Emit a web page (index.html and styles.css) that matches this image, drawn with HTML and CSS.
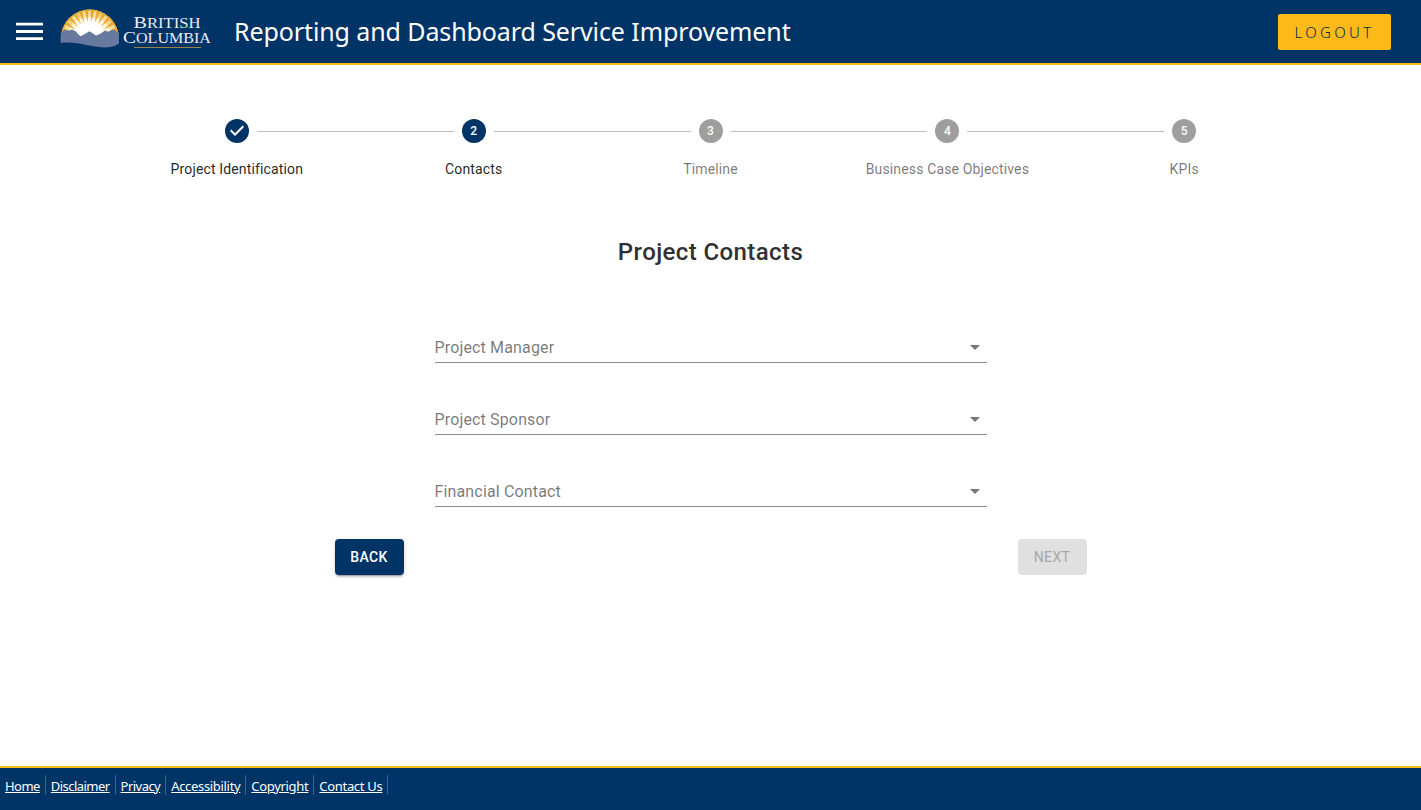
FILE: index.html
```html
<!DOCTYPE html>
<html lang="en">
<head>
<meta charset="utf-8">
<title>Reporting and Dashboard Service Improvement</title>
<link rel="stylesheet" href="styles.css">
</head>
<body>
<header class="header">
  <svg class="menu" width="27" height="20" viewBox="0 0 27 20" fill="#fff"><path d="M0 .7h27v2.800H0zM0 8h27v2.900H0zM0 15.300h27v2.800H0z"/></svg>
  <svg class="logo" width="154" height="42" viewBox="0 0 154 42">
    <defs>
      <clipPath id="dome"><path d="M.8 30.500a29 29 0 0 1 58 0z"/></clipPath>
      <path id="ray" d="M29.500 14L27.300-1H31.700z"/>
      <path id="thin" d="M29.500 9L28.700-1H30.300z"/>
    </defs>
    <g clip-path="url(#dome)">
      <path fill="#f8dc9c" d="M0 0h60v32H0z"/>
      <ellipse cx="29.500" cy="29" rx="22" ry="20" fill="#fff6de"/>
      <circle cx="29.500" cy="28" r="15" fill="#fff"/>
      <g fill="#e5a82c">
        <use href="#ray" transform="rotate(-84 29.500 31)"/><use href="#ray" transform="rotate(-70 29.500 31)"/>
        <use href="#ray" transform="rotate(-56 29.500 31)"/><use href="#ray" transform="rotate(-43 29.500 31)"/>
        <use href="#ray" transform="rotate(-30 29.500 31)"/><use href="#ray" transform="rotate(-18 29.500 31)"/>
        <use href="#ray" transform="rotate(-6 29.500 31)"/><use href="#ray" transform="rotate(6 29.500 31)"/>
        <use href="#ray" transform="rotate(18 29.500 31)"/><use href="#ray" transform="rotate(30 29.500 31)"/>
        <use href="#ray" transform="rotate(43 29.500 31)"/><use href="#ray" transform="rotate(56 29.500 31)"/>
        <use href="#ray" transform="rotate(70 29.500 31)"/><use href="#ray" transform="rotate(84 29.500 31)"/>
        <use href="#thin" transform="rotate(-49 29.500 31)"/><use href="#thin" transform="rotate(-24 29.500 31)"/>
        <use href="#thin" transform="rotate(24 29.500 31)"/><use href="#thin" transform="rotate(49 29.500 31)"/>
      </g>
      <circle cx="29.800" cy="30.500" r="28.500" fill="none" stroke="#e5a82c" stroke-width="1.500"/>
    </g>
    <path fill="#68799f" d="M.6 35L.9 24.500 5 21.800 8 22.800 12 21.600 16 23.500 18 26 20.500 28.300 23 27 29.500 23.300 33 25.500 36 27.500 40 26 45 22.500 48 23.800 53 21.500 59 24.500V35.500Q54 39.400 44 39.400C30 39.400 18 33 .6 35z"/>
    <g class="wordmark">
      <text x="73.500" y="20.200" textLength="67" lengthAdjust="spacingAndGlyphs"><tspan class="cap">B</tspan>RITISH</text>
      <text x="63" y="34.600" textLength="88" lengthAdjust="spacingAndGlyphs"><tspan class="cap">C</tspan>OLUMBIA</text>
    </g>
    <path fill="#9b8245" d="M74 39h67v1H74z"/>
  </svg>
  <h1 class="title">Reporting and Dashboard Service Improvement</h1>
  <button class="logout">LOGOUT</button>
</header>
<main class="main">
  <ol class="stepper">
    <li class="step on"><span class="dot"><svg width="24" height="24" viewBox="0 0 24 24"><path fill="#fff" d="M10 17l-5-5 1.400-1.400 3.600 3.600 7.600-7.600L19 8z"/></svg></span><span class="label">Project Identification</span></li>
    <li class="step on"><span class="dot">2</span><span class="label">Contacts</span></li>
    <li class="step"><span class="dot">3</span><span class="label">Timeline</span></li>
    <li class="step"><span class="dot">4</span><span class="label">Business Case Objectives</span></li>
    <li class="step"><span class="dot">5</span><span class="label">KPIs</span></li>
  </ol>
  <h2 class="heading">Project Contacts</h2>
  <form class="form">
    <div class="field"><span>Project Manager</span><i class="arrow"></i></div>
    <div class="field"><span>Project Sponsor</span><i class="arrow"></i></div>
    <div class="field"><span>Financial Contact</span><i class="arrow"></i></div>
  </form>
  <div class="actions">
    <button class="btn back" type="button">BACK</button>
    <button class="btn next" type="button" disabled>NEXT</button>
  </div>
</main>
<footer class="footer">
  <a class="tight" href="#">Home</a><a class="tight" href="#">Disclaimer</a><a class="tight" href="#">Privacy</a><a href="#">Accessibility</a><a href="#">Copyright</a><a href="#">Contact Us</a>
</footer>
</body>
</html>
```
FILE: styles.css
```css
* { box-sizing: border-box; }
body { margin: 0; height: 810px; display: flex; flex-direction: column; background: #fff; font-family: Roboto, sans-serif; overflow: hidden; }
.header { height: 65px; flex: none; display: flex; align-items: center; padding: 0 30px 0 16px; background: #036; border-bottom: 2px solid #fcba19; }
.menu { margin-right: 17px; flex: none; }
.logo { flex: none; margin-top: -5px; }
.wordmark { font: 14.500px "Liberation Serif", serif; fill: #e9edf3; }
.cap { font-size: 17.500px; }
.title { margin: 0 auto 0 20px; padding-bottom: 2px; font: 400 25px/34px "Noto Sans", sans-serif; letter-spacing: -.1px; color: #fff; white-space: nowrap; }
.logout { width: 113px; height: 36px; padding: 0; border: 0; border-radius: 2px; background: #fcba19; color: #00264d; font: 300 15px "Noto Sans", sans-serif; letter-spacing: 3.300px; }
.main { flex: 1; display: flex; flex-direction: column; align-items: center; }
.stepper { display: flex; width: 1184.200px; margin: 54px 0 0; padding: 0; list-style: none; }
.step { flex: 1; position: relative; display: flex; flex-direction: column; align-items: center; }
.step + .step::before { content: ""; position: absolute; top: 12px; left: calc(-50% + 20px); right: calc(50% + 20px); border-top: 1px solid #bdbdbd; }
.dot { width: 24px; height: 24px; border-radius: 50%; background: #9e9e9e; color: #fff; font-size: 12px; font-weight: 500; line-height: 24px; text-align: center; }
.dot svg { display: block; }
.on .dot { background: #036; }
.label { margin-top: 16px; font-size: 14px; line-height: 20px; letter-spacing: .14px; color: rgba(0,0,0,.54); }
.on .label { color: rgba(0,0,0,.87); }
.heading { margin: 57px 0 0; font-size: 24px; font-weight: 500; line-height: 32px; letter-spacing: .4px; color: #313132; }
.form { width: 552px; margin-top: 64px; display: flex; flex-direction: column; gap: 41px; }
.field { height: 31px; display: flex; justify-content: space-between; align-items: flex-start; border-bottom: 1px solid #8c8c8c; font-size: 16px; line-height: 31px; letter-spacing: .15px; color: rgba(0,0,0,.54); }
.arrow { margin: 13px 7px 0 0; border: 5px solid transparent; border-top-color: #757575; border-bottom: 0; }
.actions { width: 752px; margin-top: 32px; display: flex; justify-content: space-between; }
.btn { width: 69px; height: 36px; padding: 0; border: 0; border-radius: 4px; font: 500 14px Roboto, sans-serif; letter-spacing: .4px; }
.back { background: #036; color: #fff; box-shadow: 0 3px 1px -2px rgba(0,0,0,.2), 0 2px 2px rgba(0,0,0,.14), 0 1px 5px rgba(0,0,0,.12); }
.next { background: #e0e0e0; color: #a6a6a6; font-weight: 400; }
.footer { height: 44px; flex: none; display: flex; align-items: flex-start; padding-top: 7px; background: #036; border-top: 2px solid #fcba19; }
.footer a { height: 20px; padding: 0 5px; border-right: 1px solid #4b5e7e; color: #fff; font: 13px/22px "Noto Sans", sans-serif; letter-spacing: -.32px; white-space: nowrap; }
.footer .tight { letter-spacing: -.54px; }
```
